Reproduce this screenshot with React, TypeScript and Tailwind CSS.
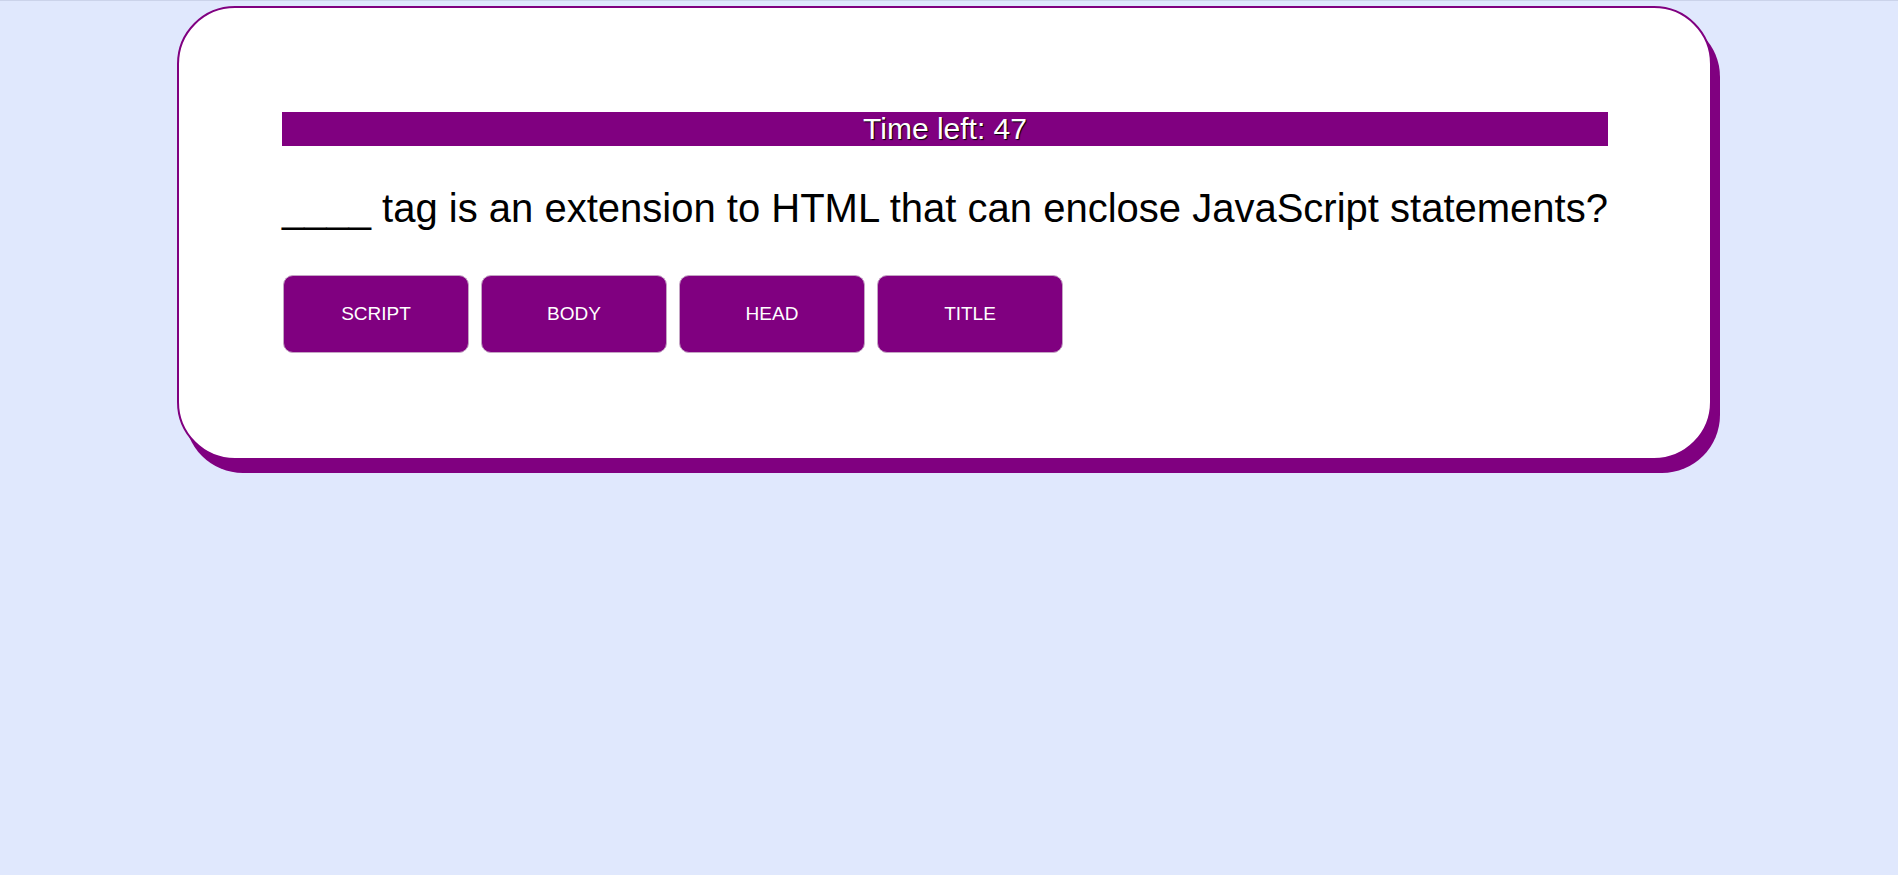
const answers = ['SCRIPT', 'BODY', 'HEAD', 'TITLE']

export default function App() {
  return (
    <div className="min-h-screen w-full border-t border-[#cbd3ea] bg-[#e0e8fd] pt-[5px] font-['Liberation_Sans',Arial,sans-serif]">
      <div className="ml-[177px] w-[1535px] rounded-[58px] border-2 border-[#800080] bg-white pt-[104px] pr-[102px] pb-[105px] pl-[103px] shadow-[8px_13px_0_#800080]">
        <div className="h-[34px] bg-[#800080] text-center text-[30px] leading-[34px] text-white [text-shadow:1px_1px_1px_#000]">
          Time left: 47
        </div>
        <h2 className="mt-[39px] text-[40px] leading-[46px] text-black">
          ____ tag is an extension to HTML that can enclose JavaScript statements?
        </h2>
        <div className="mt-[44px] ml-[1px] flex gap-[12px]">
          {answers.map((a) => (
            <button
              key={a}
              type="button"
              className="h-[78px] w-[186px] rounded-[10px] border border-[#c4a4c4] bg-[#800080] text-[19px] text-white"
            >
              {a}
            </button>
          ))}
        </div>
      </div>
    </div>
  )
}
